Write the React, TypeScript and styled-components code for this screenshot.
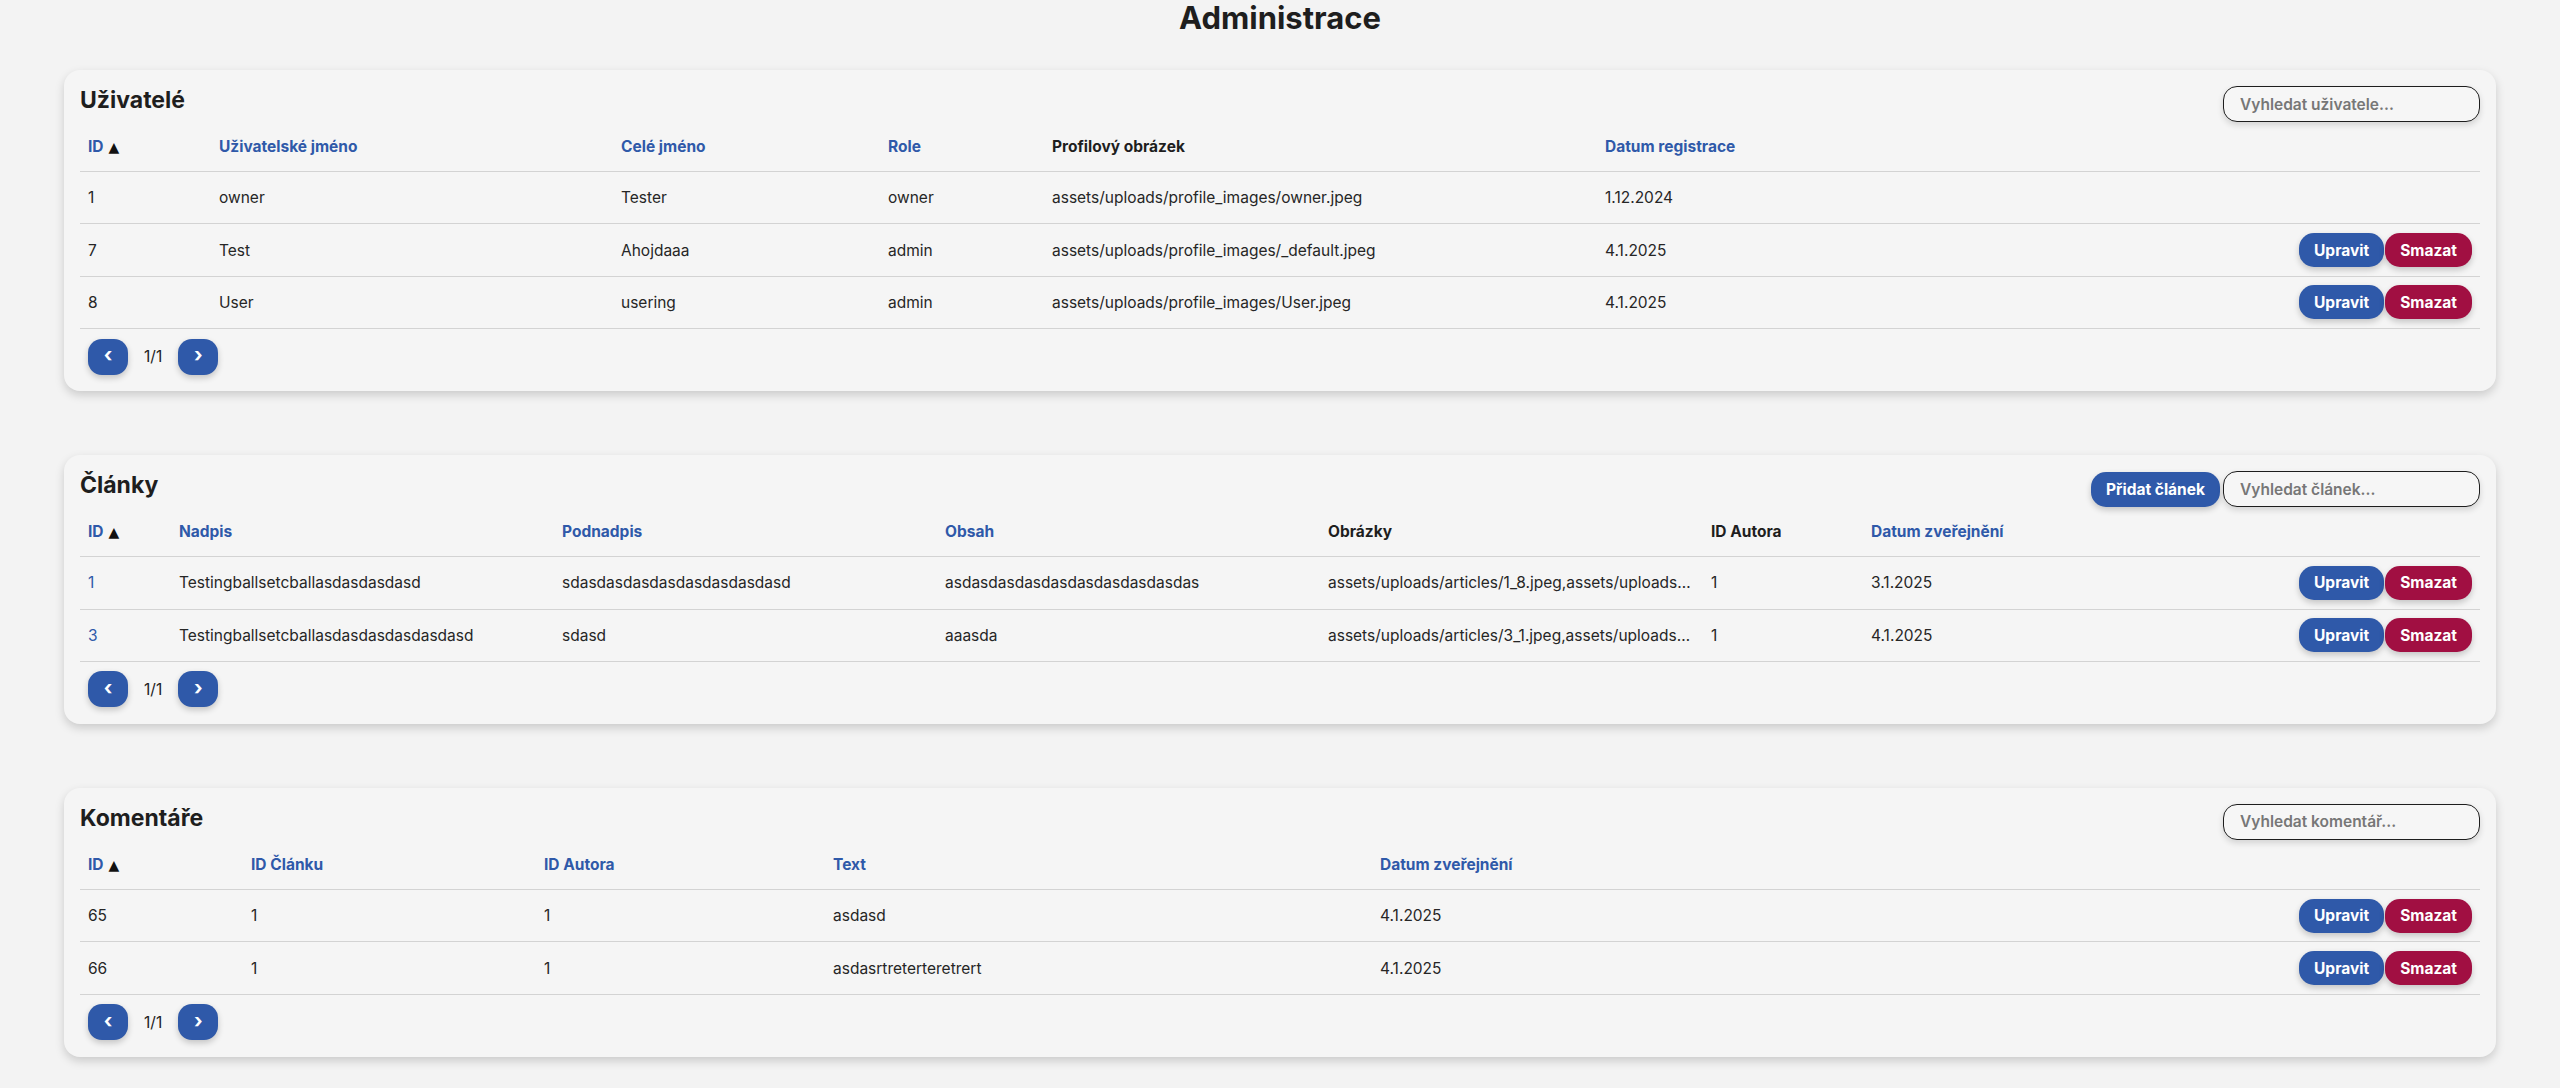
import React from "react";
import styled, { createGlobalStyle } from "styled-components";

const GlobalStyle = createGlobalStyle`
  html, body {
    margin: 0;
    padding: 0;
    background: #f3f3f3;
  }
  body {
    font-family: Inter, "Noto Sans", "Liberation Sans", sans-serif;
    color: #222222;
  }
  *, *::before, *::after {
    box-sizing: border-box;
  }
`;

const BLUE = "#2f59a9";
const RED = "#a10f42";
const LINE = "#d3d3d3";

const Page = styled.main`
  padding: 0 64px 32px;
`;

const PageTitle = styled.h1`
  margin: 0 0 34px;
  font-size: 31px;
  line-height: 36px;
  font-weight: 700;
  text-align: center;
  color: #1e1e1e;
`;

const Sections = styled.div`
  display: flex;
  flex-direction: column;
  gap: 64px;
`;

const Card = styled.section`
  background: #f5f5f5;
  border-radius: 16px;
  box-shadow: 0 4px 10px rgba(0, 0, 0, 0.17);
  padding: 16px;
`;

const CardHeader = styled.div`
  display: flex;
  justify-content: space-between;
  align-items: flex-start;
  height: 36px;
`;

const CardTitle = styled.h2`
  margin: 0;
  font-size: 23px;
  line-height: 29px;
  font-weight: 700;
  color: #1e1e1e;
`;

const Controls = styled.div`
  display: flex;
  align-items: center;
  gap: 3px;
`;

const SearchInput = styled.input`
  width: 257px;
  height: 36px;
  padding: 0 16px;
  border: 1px solid #1e1e1e;
  border-radius: 14px;
  background: #f6f6f6;
  box-shadow: 0 3px 6px rgba(0, 0, 0, 0.14);
  font-family: inherit;
  font-size: 15.5px;
  font-weight: 600;
  color: #222222;
  outline: none;
  &::placeholder {
    color: #777777;
    font-weight: 600;
  }
`;

const PrimaryButton = styled.button`
  height: 35px;
  padding: 0 15px;
  border: none;
  border-radius: 15px;
  background: ${BLUE};
  color: #ffffff;
  font-family: inherit;
  font-size: 15.5px;
  font-weight: 700;
  box-shadow: 0 3px 6px rgba(0, 0, 0, 0.2);
  cursor: pointer;
`;

const Table = styled.table`
  width: 100%;
  border-collapse: separate;
  border-spacing: 0;
  table-layout: fixed;
`;

const Col = styled.col<{ $w?: number }>`
  width: ${(p) => (p.$w ? `${p.$w}px` : "auto")};
`;

const Th = styled.th<{ $sortable: boolean }>`
  height: 50px;
  padding: 0 8px;
  text-align: left;
  vertical-align: middle;
  font-size: 15.5px;
  font-weight: 700;
  color: ${(p) => (p.$sortable ? BLUE : "#1e1e1e")};
  border-bottom: 1px solid ${LINE};
  white-space: nowrap;
`;

const SortMark = styled.span`
  color: #111111;
  font-size: 14px;
  margin-left: 5px;
  font-family: "DejaVu Sans", sans-serif;
`;

const Td = styled.td<{ $link?: boolean; $right?: boolean }>`
  height: 52.4px;
  padding: 0 8px;
  vertical-align: middle;
  font-size: 15.5px;
  font-weight: 400;
  color: ${(p) => (p.$link ? BLUE : "#262626")};
  text-align: ${(p) => (p.$right ? "right" : "left")};
  border-bottom: 1px solid ${LINE};
  white-space: nowrap;
  overflow: hidden;
  text-overflow: ellipsis;
`;

const Actions = styled.div`
  display: flex;
  justify-content: flex-end;
  gap: 1px;
`;

const ActionButton = styled.button<{ $variant: "edit" | "delete" }>`
  height: 34px;
  padding: 0 15px;
  border: none;
  border-radius: 15px;
  background: ${(p) => (p.$variant === "edit" ? BLUE : RED)};
  color: #ffffff;
  font-family: inherit;
  font-size: 15.5px;
  font-weight: 700;
  box-shadow: 0 3px 6px rgba(0, 0, 0, 0.2);
  cursor: pointer;
`;

const Pagination = styled.div`
  display: flex;
  align-items: center;
  gap: 16px;
  margin-top: 9px;
  padding-left: 8px;
  height: 37px;
`;

const PageButton = styled.button`
  width: 40px;
  height: 36px;
  border: none;
  border-radius: 14px;
  background: ${BLUE};
  color: #ffffff;
  font-family: inherit;
  font-size: 20px;
  font-weight: 700;
  line-height: 1;
  display: flex;
  align-items: center;
  justify-content: center;
  padding: 0 0 3px;
  box-shadow: 0 3px 6px rgba(0, 0, 0, 0.2);
  cursor: pointer;
`;

const PageInfo = styled.span`
  font-size: 15.5px;
  color: #222222;
`;

type Column = { label: string; width?: number; sortable?: boolean; sorted?: boolean };
type Cell = { text: string; link?: boolean };
type Row = { cells: Cell[]; actions: boolean };

type TableCardProps = {
  title: string;
  placeholder: string;
  addLabel?: string;
  columns: Column[];
  rows: Row[];
};

const TableCard: React.FC<TableCardProps> = ({ title, placeholder, addLabel, columns, rows }) => (
  <Card>
    <CardHeader>
      <CardTitle>{title}</CardTitle>
      <Controls>
        {addLabel && <PrimaryButton>{addLabel}</PrimaryButton>}
        <SearchInput placeholder={placeholder} />
      </Controls>
    </CardHeader>
    <Table>
      <colgroup>
        {columns.map((c, i) => (
          <Col key={i} $w={c.width} />
        ))}
        <Col $w={200} />
      </colgroup>
      <thead>
        <tr>
          {columns.map((c, i) => (
            <Th key={i} $sortable={!!c.sortable}>
              {c.label}
              {c.sorted && <SortMark>▲</SortMark>}
            </Th>
          ))}
          <Th $sortable={false} />
        </tr>
      </thead>
      <tbody>
        {rows.map((r, i) => (
          <tr key={i}>
            {r.cells.map((c, j) => (
              <Td key={j} $link={c.link}>
                {c.text}
              </Td>
            ))}
            <Td $right>
              {r.actions && (
                <Actions>
                  <ActionButton $variant="edit">Upravit</ActionButton>
                  <ActionButton $variant="delete">Smazat</ActionButton>
                </Actions>
              )}
            </Td>
          </tr>
        ))}
      </tbody>
    </Table>
    <Pagination>
      <PageButton aria-label="Předchozí">‹</PageButton>
      <PageInfo>1/1</PageInfo>
      <PageButton aria-label="Další">›</PageButton>
    </Pagination>
  </Card>
);

const t = (text: string, link?: boolean): Cell => ({ text, link });

const userColumns: Column[] = [
  { label: "ID", width: 131, sortable: true, sorted: true },
  { label: "Uživatelské jméno", width: 402, sortable: true },
  { label: "Celé jméno", width: 267, sortable: true },
  { label: "Role", width: 164, sortable: true },
  { label: "Profilový obrázek", width: 553 },
  { label: "Datum registrace", sortable: true },
];

const userRows: Row[] = [
  { cells: [t("1"), t("owner"), t("Tester"), t("owner"), t("assets/uploads/profile_images/owner.jpeg"), t("1.12.2024")], actions: false },
  { cells: [t("7"), t("Test"), t("Ahojdaaa"), t("admin"), t("assets/uploads/profile_images/_default.jpeg"), t("4.1.2025")], actions: true },
  { cells: [t("8"), t("User"), t("usering"), t("admin"), t("assets/uploads/profile_images/User.jpeg"), t("4.1.2025")], actions: true },
];

const articleColumns: Column[] = [
  { label: "ID", width: 91, sortable: true, sorted: true },
  { label: "Nadpis", width: 383, sortable: true },
  { label: "Podnadpis", width: 383, sortable: true },
  { label: "Obsah", width: 383, sortable: true },
  { label: "Obrázky", width: 383 },
  { label: "ID Autora", width: 160 },
  { label: "Datum zveřejnění", sortable: true },
];

const articleRows: Row[] = [
  {
    cells: [
      t("1", true),
      t("Testingballsetcballasdasdasdasd"),
      t("sdasdasdasdasdasdasdasdasd"),
      t("asdasdasdasdasdasdasdasdasdas"),
      t("assets/uploads/articles/1_8.jpeg,assets/uploads/articles/1_9.jpeg"),
      t("1"),
      t("3.1.2025"),
    ],
    actions: true,
  },
  {
    cells: [
      t("3", true),
      t("Testingballsetcballasdasdasdasdasdasd"),
      t("sdasd"),
      t("aaasda"),
      t("assets/uploads/articles/3_1.jpeg,assets/uploads/articles/3_2.jpeg"),
      t("1"),
      t("4.1.2025"),
    ],
    actions: true,
  },
];

const commentColumns: Column[] = [
  { label: "ID", width: 163, sortable: true, sorted: true },
  { label: "ID Článku", width: 293, sortable: true },
  { label: "ID Autora", width: 289, sortable: true },
  { label: "Text", width: 547, sortable: true },
  { label: "Datum zveřejnění", sortable: true },
];

const commentRows: Row[] = [
  { cells: [t("65"), t("1"), t("1"), t("asdasd"), t("4.1.2025")], actions: true },
  { cells: [t("66"), t("1"), t("1"), t("asdasrtreterteretrert"), t("4.1.2025")], actions: true },
];

export default function App() {
  return (
    <>
      <GlobalStyle />
      <Page>
        <PageTitle>Administrace</PageTitle>
        <Sections>
          <TableCard title="Uživatelé" placeholder="Vyhledat uživatele..." columns={userColumns} rows={userRows} />
          <TableCard
            title="Články"
            placeholder="Vyhledat článek..."
            addLabel="Přidat článek"
            columns={articleColumns}
            rows={articleRows}
          />
          <TableCard title="Komentáře" placeholder="Vyhledat komentář..." columns={commentColumns} rows={commentRows} />
        </Sections>
      </Page>
    </>
  );
}
